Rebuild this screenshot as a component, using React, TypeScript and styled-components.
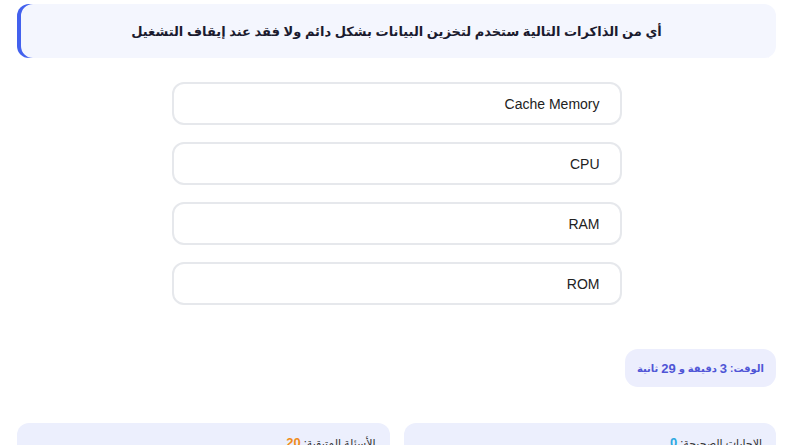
import React from "react";
import styled, { createGlobalStyle } from "styled-components";

const Global = createGlobalStyle`
  html, body { margin: 0; padding: 0; background: #ffffff; }
  body { font-family: "Liberation Sans", "DejaVu Sans", sans-serif; }
  * { box-sizing: border-box; }
`;

const Page = styled.div`
  direction: rtl;
  padding: 4px 17px 0 17px;
  display: flex;
  flex-direction: column;
`;

const Question = styled.div`
  background: #f4f6fe;
  border-radius: 12px;
  box-shadow: inset 4px 0 0 #4361ee;
  height: 54px;
  display: flex;
  align-items: center;
  justify-content: center;
  font-size: 13px;
  font-weight: 700;
  color: #1b1b2f;
`;

const Options = styled.div`
  display: flex;
  flex-direction: column;
  align-items: center;
  gap: 17px;
  margin-top: 24px;
`;

const Option = styled.button`
  width: 450px;
  height: 43px;
  background: #ffffff;
  border: 2px solid #e6e8ec;
  border-radius: 12px;
  direction: rtl;
  text-align: right;
  padding: 0 20px;
  font-family: "Liberation Sans", Arial, sans-serif;
  font-size: 14px;
  color: #222;
  cursor: pointer;
`;

const TimerRow = styled.div`
  display: flex;
  justify-content: flex-start;
  margin-top: 44px;
`;

const Timer = styled.div`
  background: #eceefd;
  border-radius: 13px;
  height: 38px;
  padding: 0 12px;
  display: flex;
  align-items: center;
  white-space: nowrap;
  font-size: 10px;
  font-weight: 700;
  color: #4f55d6;
`;

const Num = styled.span`
  font-family: "Liberation Sans", Arial, sans-serif;
  font-size: 13px;
  font-weight: 700;
  margin: 0 3px;
`;

const Stats = styled.div`
  display: grid;
  grid-template-columns: 1fr 1fr;
  gap: 14px;
  margin-top: 36px;
`;

const StatCard = styled.div`
  background: #eceffd;
  border-radius: 12px;
  height: 60px;
  padding: 12px 14px;
  font-size: 11px;
  color: #333;
  text-align: right;
`;

const StatNum = styled.span<{ $color: string }>`
  color: ${(p) => p.$color};
  font-family: "Liberation Sans", Arial, sans-serif;
  font-weight: 700;
  font-size: 13px;
`;

export default function App() {
  const options = ["Cache Memory", "CPU", "RAM", "ROM"];
  return (
    <>
      <Global />
      <Page>
        <Question>أي من الذاكرات التالية ستخدم لتخزين البيانات بشكل دائم ولا فقد عند إيقاف التشغيل</Question>
        <Options>
          {options.map((o) => (
            <Option key={o}>{o}</Option>
          ))}
        </Options>
        <TimerRow>
          <Timer>
            الوقت:<Num>3</Num>دقيقة و<Num>29</Num>ثانية
          </Timer>
        </TimerRow>
        <Stats>
          <StatCard>
            الإجابات الصحيحة: <StatNum $color="#2ba8e0">0</StatNum>
          </StatCard>
          <StatCard>
            الأسئلة المتبقية: <StatNum $color="#f08c1a">20</StatNum>
          </StatCard>
        </Stats>
      </Page>
    </>
  );
}
